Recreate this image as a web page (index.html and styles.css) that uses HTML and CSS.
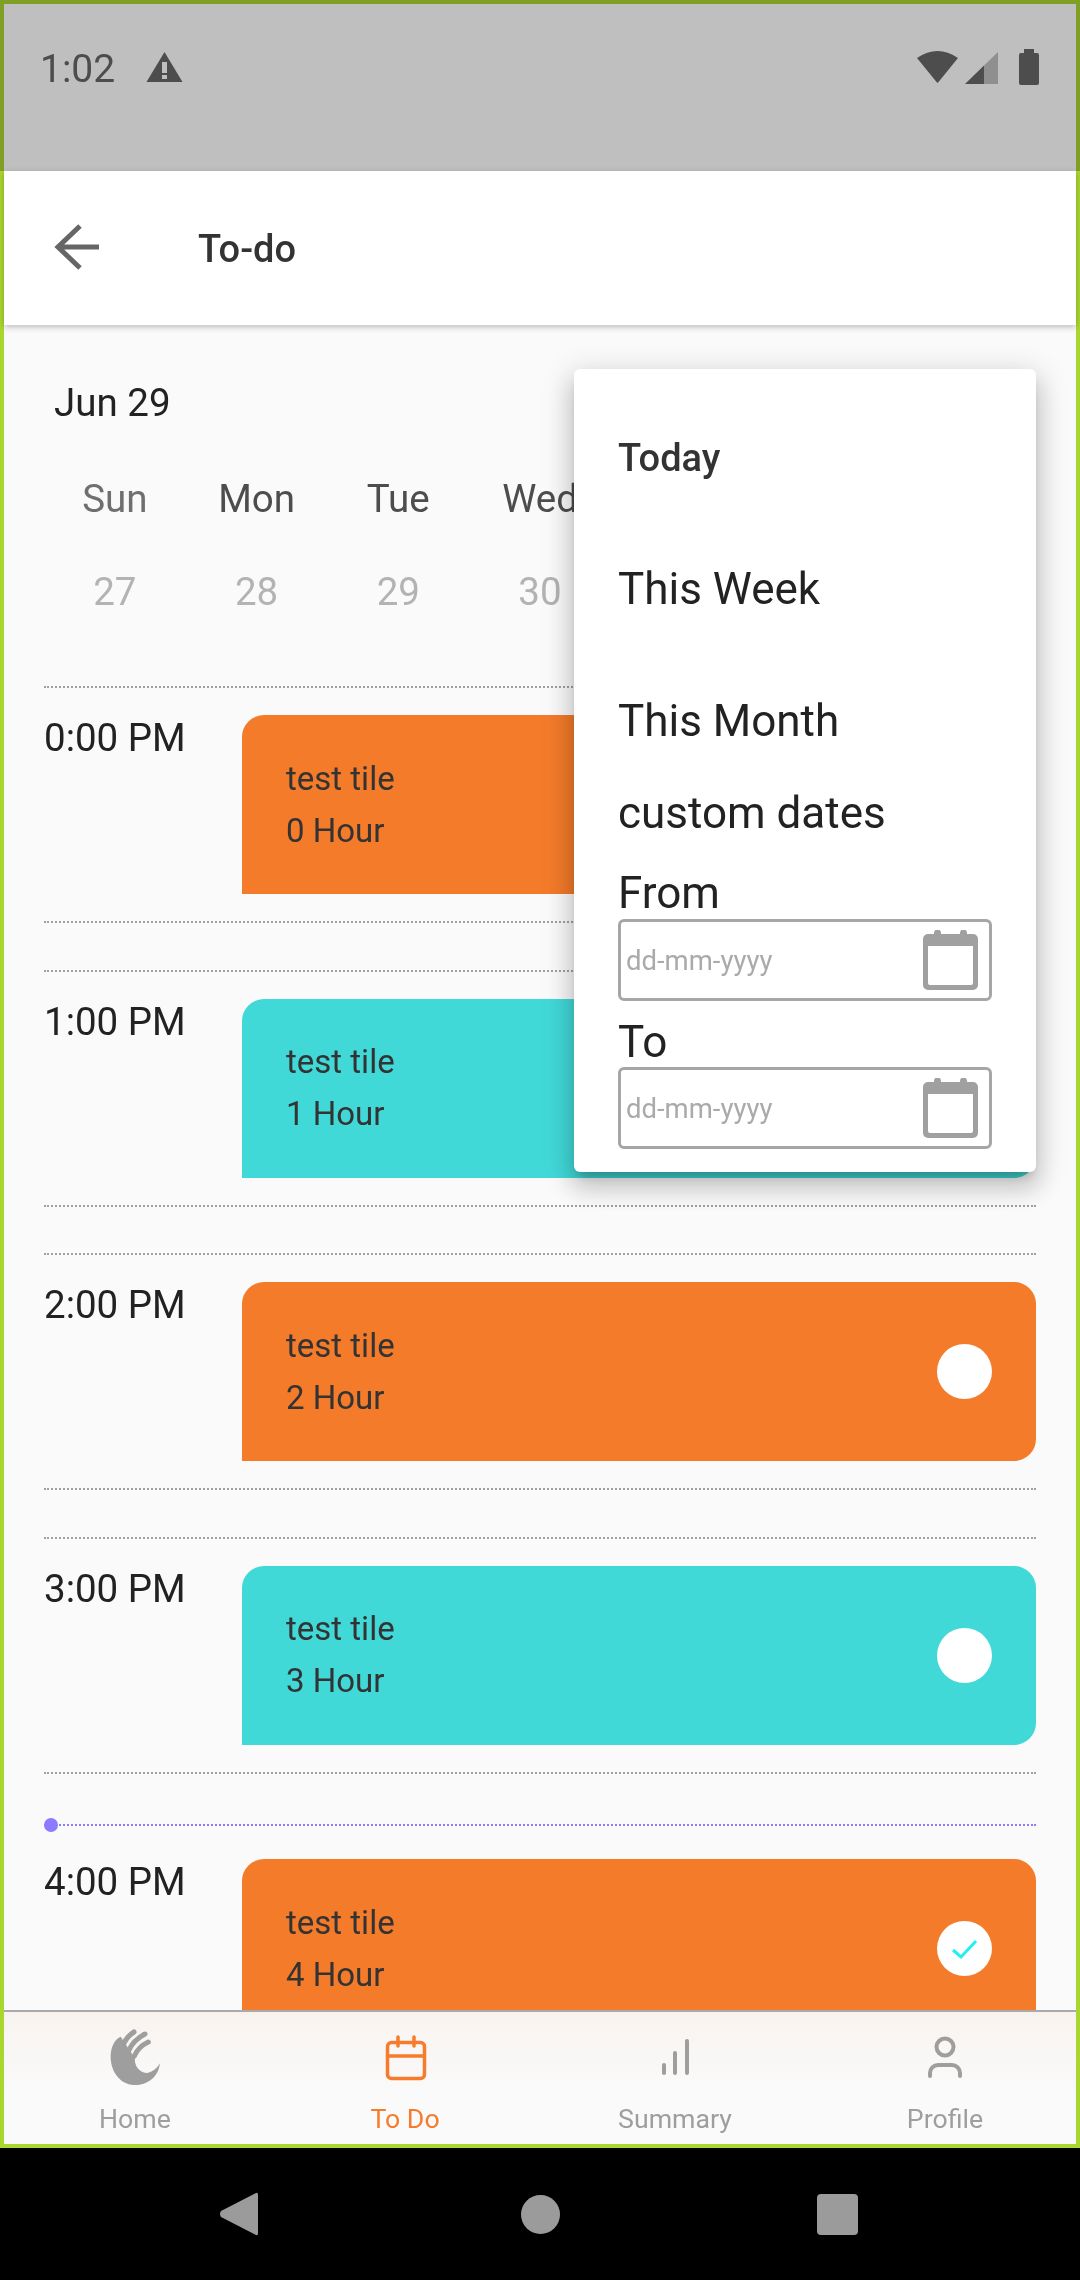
FILE: index.html
```html
<!DOCTYPE html>
<html>
<head>
	<title>To-do</title>
	<meta charset="utf-8">
	<link rel="stylesheet" href="styles.css">
</head>
<body>
	<div class="frame">
		<div class="status">
			<span class="clock">1:02</span>
			<svg class="warn" width="37" height="32" viewBox="0 0 37 32">
				<path fill-rule="evenodd" d="M18.5 1 L36.5 31 H.5Z M16 11 V22 H21 V11Z M16 24 V28 H21 V24Z"/>
			</svg>
			<svg class="sys" width="125" height="40" viewBox="0 0 125 40">
				<path d="M2 11 Q22.5 -3 43 11 L23.5 35 Q22.5 36.5 21.5 35 Z"/>
				<path d="M50 37 L69 18.6 V37Z"/>
				<path class="dim" d="M69 18.6 L83 5 V37 H69Z"/>
				<rect x="104" y="6" width="20" height="32" rx="2"/>
				<rect x="109" y="2" width="10" height="5"/>
			</svg>
		</div>
		<div class="appbar">
			<svg class="back" width="54" height="50" viewBox="0 0 54 50">
				<path d="M47 24 H6 M28 3 L6 24 L28 45"/>
			</svg>
			<span class="title">To-do</span>
		</div>
		<div class="main">
			<div class="month">Jun 29</div>
			<div class="week">
				<span class="first">Sun</span>
				<span>Mon</span>
				<span>Tue</span>
				<span>Wed</span>
			</div>
			<div class="days">
				<span>27</span>
				<span>28</span>
				<span>29</span>
				<span>30</span>
			</div>

			<div class="slot">
				<div class="time">0:00 PM</div>
				<div class="card orange">
					<div class="info"><p>test tile</p><p>0 Hour</p></div>
					<div class="tick"></div>
				</div>
			</div>
			<div class="slot">
				<div class="time">1:00 PM</div>
				<div class="card teal">
					<div class="info"><p>test tile</p><p>1 Hour</p></div>
					<div class="tick"></div>
				</div>
			</div>
			<div class="slot">
				<div class="time">2:00 PM</div>
				<div class="card orange">
					<div class="info"><p>test tile</p><p>2 Hour</p></div>
					<div class="tick"></div>
				</div>
			</div>
			<div class="slot">
				<div class="time">3:00 PM</div>
				<div class="card teal">
					<div class="info"><p>test tile</p><p>3 Hour</p></div>
					<div class="tick"></div>
				</div>
			</div>
			<div class="slot now">
				<div class="time">4:00 PM</div>
				<div class="card orange">
					<div class="info"><p>test tile</p><p>4 Hour</p></div>
					<div class="tick">
						<svg width="55" height="55" viewBox="0 0 55 55"><path d="M16 29 L24 36 L39 20"/></svg>
					</div>
				</div>
			</div>
		</div>

		<div class="menu">
			<div class="item active">Today</div>
			<div class="item">This Week</div>
			<div class="item">This Month</div>
			<div class="custom">custom dates</div>
			<div class="label from">From</div>
			<div class="date">
				<span>dd-mm-yyyy</span>
				<svg width="55" height="60" viewBox="0 0 55 60">
					<path fill-rule="evenodd" d="M5 4 H11 V3 a3.500 3.500 0 0 1 7 0 V4 H37 V3 a3.500 3.500 0 0 1 7 0 V4 H50 a5 5 0 0 1 5 5 V55 a5 5 0 0 1 -5 5 H5 a5 5 0 0 1 -5 -5 V9 a5 5 0 0 1 5 -5Z M5 16 V53 a2 2 0 0 0 2 2 H48 a2 2 0 0 0 2 -2 V16Z"/>
				</svg>
			</div>
			<div class="label to">To</div>
			<div class="date">
				<span>dd-mm-yyyy</span>
				<svg width="55" height="60" viewBox="0 0 55 60">
					<path fill-rule="evenodd" d="M5 4 H11 V3 a3.500 3.500 0 0 1 7 0 V4 H37 V3 a3.500 3.500 0 0 1 7 0 V4 H50 a5 5 0 0 1 5 5 V55 a5 5 0 0 1 -5 5 H5 a5 5 0 0 1 -5 -5 V9 a5 5 0 0 1 5 -5Z M5 16 V53 a2 2 0 0 0 2 2 H48 a2 2 0 0 0 2 -2 V16Z"/>
				</svg>
			</div>
		</div>

		<div class="tabs">
			<div class="tab-row">
				<div class="tab">
					<svg width="64" height="64" viewBox="39 18 192 192">
						<path class="fill" d="M210 130 C204 178 165 197 132 195 C88 193 60 152 62 105 C63 80 76 55 92 50 L135 115 C130 150 175 185 210 130Z"/>
						<path class="finger" d="M96 84 Q106 52 132 36"/>
						<path class="finger" d="M116 92 Q130 60 165 42"/>
						<path class="finger" d="M133 108 Q145 80 175 66"/>
					</svg>
					<span>Home</span>
				</div>
				<div class="tab on">
					<svg width="64" height="64" viewBox="0 0 64 64">
						<rect x="14.500" y="16.500" width="37" height="36" rx="4"/>
						<path d="M14.500 30 H51.500 M25 11 V20 M41 11 V20"/>
					</svg>
					<span>To Do</span>
				</div>
				<div class="tab">
					<svg class="bars" width="64" height="64" viewBox="0 0 64 64">
						<path d="M21 39 V47 M32 27 V47 M44 15 V47"/>
					</svg>
					<span>Summary</span>
				</div>
				<div class="tab">
					<svg width="64" height="64" viewBox="0 0 64 64">
						<circle cx="32" cy="21" r="8.500"/>
						<path d="M17 50 V47 a8 8 0 0 1 8 -8 H39 a8 8 0 0 1 8 8 V50"/>
					</svg>
					<span>Profile</span>
				</div>
			</div>
		</div>
	</div>
	<div class="softkeys">
		<svg class="key-back" width="38" height="44" viewBox="0 0 38 44"><path d="M36 1 Q38 0 38 3 V41 Q38 44 36 43 L1 25 Q-1 22 1 19Z"/></svg>
		<div class="key-home"></div>
		<div class="key-recent"></div>
	</div>
</body>
</html>
```

FILE: styles.css
```css
*{
	margin:0;
	padding:0;
	box-sizing:border-box;
}
body{
	width:1080px;
	height:2280px;
	overflow:hidden;
	background:#000;
	font-family:Roboto,"Noto Sans",sans-serif;
}
.frame{
	position:relative;
	height:2148px;
	border:4px solid #a9d62f;
	background:#fff;
	display:flex;
	flex-direction:column;
}
/* dim layer of the status bar also covers the frame border */
.frame::before{
	content:"";
	position:absolute;
	top:-4px;
	left:-4px;
	right:-4px;
	height:171px;
	background:#bfbfbf;
	mix-blend-mode:multiply;
	z-index:3;
}
.status{
	height:167px;
	display:flex;
	align-items:flex-start;
	padding:0 0 0 36px;
	position:relative;
	z-index:4;
	color:#4d4d4d;
}
.clock{
	font-size:39px;
	line-height:44px;
	margin-top:43px;
	width:106px;
}
.warn{
	margin-top:47px;
	fill:#4d4d4d;
}
.sys{
	margin:43px 0 0 732px;
	fill:#4d4d4d;
}
.sys .dim{
	fill:#8f8f8f;
}
.appbar{
	height:154px;
	background:#fff;
	display:flex;
	align-items:center;
	padding-left:48px;
	box-shadow:0 2px 6px rgba(0,0,0,.25);
	position:relative;
	z-index:2;
}
.back{
	fill:none;
	stroke:#666;
	stroke-width:5;
}
.title{
	font-size:38px;
	font-weight:500;
	color:#333;
	margin:2px 0 0 92px;
}
.main{
	flex:1;
	overflow:hidden;
	background:#fafafa;
	padding:56px 40px 0;
}
.month{
	font-size:38.500px;
	line-height:44px;
	color:#222;
	padding-left:10px;
}
.week,.days{
	display:grid;
	grid-template-columns:repeat(7,1fr);
	text-align:center;
	font-size:38.500px;
	line-height:44px;
}
.week{
	margin-top:52px;
	color:#4d4d4d;
}
.week .first{
	color:#6f6f6f;
}
.days{
	margin-top:49px;
	color:#b3b3b3;
}
.slot{
	display:flex;
	border-top:2px dotted #a0a0a0;
	border-bottom:2px dotted #a0a0a0;
	padding:27px 0;
	margin-bottom:46.500px;
}
.days + .slot{
	margin-top:72px;
}
.slot.now{
	position:relative;
	border-top-color:#8c7bff;
	border-bottom:0;
	padding-top:33px;
	margin-top:50.500px;
}
.slot.now::before{
	content:"";
	position:absolute;
	left:0;
	top:-8px;
	width:14px;
	height:14px;
	border-radius:50%;
	background:#8c7bff;
}
.time{
	width:198px;
	font-size:38.500px;
	line-height:44px;
	padding-top:1px;
	color:#222;
}
.card{
	flex:1;
	height:179px;
	border-radius:22px 22px 22px 0;
	display:flex;
	align-items:center;
	justify-content:space-between;
	padding:0 44px;
}
.orange{
	background:#f47b2a;
}
.teal{
	background:#41d9d8;
}
.info{
	font-size:33px;
	line-height:52px;
	color:#333;
}
.tick{
	width:55px;
	height:55px;
	border-radius:50%;
	background:#fff;
}
.tick svg{
	display:block;
	fill:none;
	stroke:#20f0f5;
	stroke-width:3;
}
.menu{
	position:absolute;
	left:570px;
	top:365px;
	width:462px;
	height:803px;
	background:#fff;
	border-radius:6px;
	padding:23px 44px 0;
	color:#222;
	font-size:44px;
	z-index:5;
	box-shadow:0 8px 10px -5px rgba(0,0,0,.2),0 16px 24px 2px rgba(0,0,0,.14),0 6px 30px 5px rgba(0,0,0,.12);
}
.item{
	height:132px;
	line-height:130px;
}
.item.active{
	font-size:38px;
	font-weight:500;
	line-height:132px;
	color:#333;
}
.custom,.label{
	height:50px;
	line-height:50px;
}
.label.from{
	margin-top:30px;
}
.label.to{
	margin-top:16px;
}
.date{
	height:82px;
	margin-top:1px;
	border:3px solid #a6a6a6;
	border-radius:6px;
	display:flex;
	align-items:center;
	justify-content:space-between;
	padding:0 11px 0 5px;
	font-size:27.500px;
	color:#aaa;
}
.to + .date{
	margin-top:0;
}
.date svg{
	fill:#a0a0a0;
}
.tabs{
	height:134px;
	border-top:2px solid #aaa;
	background:linear-gradient(#f8f3ef,#fafafa 60%);
}
.tab-row{
	display:grid;
	grid-template-columns:repeat(4,1fr);
	margin:0 -4px;
}
.tab{
	display:flex;
	flex-direction:column;
	align-items:center;
	padding-top:14px;
	font-size:26.700px;
	line-height:36px;
	color:#9e9e9e;
}
.tab span{
	margin-top:11px;
}
.tab svg{
	fill:none;
	stroke:#9e9e9e;
	stroke-width:4;
	stroke-linecap:round;
}
.tab .fill{
	fill:#9e9e9e;
	stroke:none;
}
.tab .finger{
	stroke-width:15;
}
.tab.on{
	color:#f67c2c;
}
.tab.on svg{
	stroke:#f67c2c;
	stroke-width:3.500;
}
.softkeys{
	height:132px;
	background:#000;
	display:flex;
	align-items:center;
	padding-left:220px;
}
.key-back{
	fill:#9b9b9b;
}
.key-home{
	width:39px;
	height:39px;
	border-radius:50%;
	background:#9b9b9b;
	margin-left:263px;
}
.key-recent{
	width:41px;
	height:41px;
	border-radius:4px;
	background:#9b9b9b;
	margin-left:257px;
}
```
